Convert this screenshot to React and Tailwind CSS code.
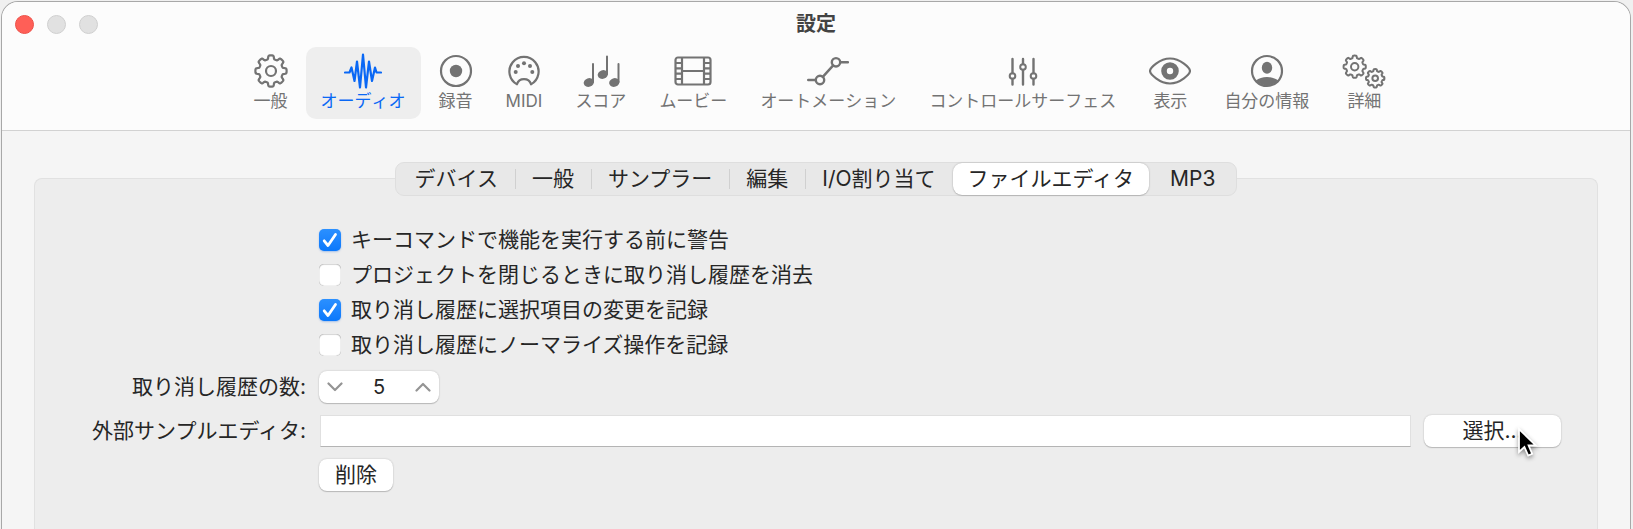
import { useState } from 'react'

// Closed gear outline around (cx, cy): eight soft teeth between the two radii
function gearPath(cx, cy, outer, inner) {
  const mid = (outer + inner) / 2
  const amp = (outer - inner) / 2
  const pts = []
  for (let i = 0; i < 160; i++) {
    const a = (i * Math.PI) / 80
    const r = mid + amp * Math.tanh(3 * (Math.cos(8 * a) + 0.1))
    pts.push(`${(cx + r * Math.sin(a)).toFixed(2)} ${(cy - r * Math.cos(a)).toFixed(2)}`)
  }
  return `M${pts.join('L')}Z`
}

function GearIcon() {
  return (
    <svg width="34" height="36" viewBox="0 0 34 36" fill="none" stroke="currentColor" strokeWidth="2.200" strokeLinejoin="round">
      <path d={gearPath(17, 18, 15.6, 12)} />
      <circle cx="17" cy="18" r="5" />
    </svg>
  )
}

function WaveIcon() {
  return (
    <svg width="38" height="36" viewBox="0 0 38 36" fill="none" stroke="currentColor" strokeWidth="2.200" strokeLinecap="round" strokeLinejoin="round">
      <path d="M1 19.500H5.500L7.500 14.500L10.500 28L13 8.500L16 34.500L19 1.500L22 34.500L25 8.500L28 28L31 14.500L32.500 19.500H37" />
    </svg>
  )
}

function RecordIcon() {
  return (
    <svg width="34" height="36" viewBox="0 0 34 36" fill="none" stroke="currentColor" strokeWidth="2.200">
      <circle cx="17" cy="18" r="15" />
      <circle cx="17" cy="18" r="6.200" fill="currentColor" stroke="none" />
    </svg>
  )
}

function MidiIcon() {
  return (
    <svg width="32" height="36" viewBox="0 0 32 36" fill="none" stroke="currentColor" strokeWidth="2.200" strokeLinejoin="round">
      <path d="M9 31.300A14.600 14.600 0 1 1 23 31.300C21 24.500 11 24.500 9 31.300Z" />
      <g fill="currentColor" stroke="none">
        <circle cx="7.700" cy="19" r="2" />
        <circle cx="10" cy="13" r="2" />
        <circle cx="16" cy="10.300" r="2" />
        <circle cx="22" cy="13" r="2" />
        <circle cx="24.300" cy="19" r="2" />
      </g>
    </svg>
  )
}

function ScoreIcon() {
  return (
    <svg width="38" height="36" viewBox="0 0 38 36" fill="currentColor" stroke="currentColor" strokeWidth="2" strokeLinecap="round">
      <path d="M11 29V11M25 21V3.500M36.500 29V11" />
      <g stroke="none">
        <ellipse cx="6.800" cy="29.500" rx="5.200" ry="4.300" transform="rotate(-18 6.800 29.500)" />
        <ellipse cx="20.800" cy="21.500" rx="5.200" ry="4.300" transform="rotate(-18 20.800 21.500)" />
        <ellipse cx="32.300" cy="29.500" rx="5.200" ry="4.300" transform="rotate(-18 32.300 29.500)" />
      </g>
    </svg>
  )
}

function MovieIcon() {
  return (
    <svg width="38" height="36" viewBox="0 0 38 36" fill="none" stroke="currentColor" strokeWidth="2.200">
      <rect x="1.500" y="4.500" width="35" height="27" rx="2.500" />
      <path d="M8 5V31M30 5V31M8 18H30" />
      <path d="M2 10H8M2 15.300H8M2 20.600H8M2 26H8M30 10H36M30 15.300H36M30 20.600H36M30 26H36" />
    </svg>
  )
}

function AutomationIcon() {
  return (
    <svg width="42" height="36" viewBox="0 0 42 36" fill="none" stroke="currentColor" strokeWidth="2.400" strokeLinecap="round">
      <circle cx="13" cy="27" r="4.200" />
      <circle cx="29" cy="9.300" r="4.200" />
      <path d="M1.200 27H8.800M15.800 23.900L26.200 12.400M33.200 9.300H41" />
    </svg>
  )
}

function SlidersIcon() {
  return (
    <svg width="30" height="36" viewBox="0 0 30 36" fill="none" stroke="currentColor" strokeWidth="2.400" strokeLinecap="round">
      <path d="M4.500 6V20M4.500 26V31.500M15 6V11M15 17V31.500M25.500 6V20M25.500 26V31.500" />
      <g strokeWidth="2">
        <circle cx="4.500" cy="23" r="2.800" />
        <circle cx="15" cy="14" r="2.800" />
        <circle cx="25.500" cy="23" r="2.800" />
      </g>
    </svg>
  )
}

function EyeIcon() {
  return (
    <svg width="42" height="36" viewBox="0 0 42 36" fill="none" stroke="currentColor" strokeWidth="2.200">
      <path d="M1 18C1 15 10.500 5.500 21 5.500S41 15 41 18S31.500 30.500 21 30.500S1 21 1 18Z" />
      <circle cx="21" cy="18" r="6" strokeWidth="5.600" />
    </svg>
  )
}

function PersonIcon() {
  return (
    <svg width="34" height="36" viewBox="0 0 34 36" fill="none" stroke="currentColor" strokeWidth="2.200">
      <circle cx="17" cy="18" r="15" />
      <ellipse cx="17" cy="14.800" rx="5.200" ry="6" fill="currentColor" stroke="none" />
      <path d="M6 27.500C11 22.800 23 22.800 28 27.500A15 15 0 0 1 6 27.500Z" fill="currentColor" stroke="none" />
    </svg>
  )
}

function GearsIcon() {
  return (
    <svg width="44" height="36" viewBox="0 0 44 36" fill="none" stroke="currentColor" strokeWidth="2" strokeLinejoin="round">
      <path d={gearPath(12.7, 13.7, 11.1, 8.7)} />
      <circle cx="12.700" cy="13.700" r="3.700" />
      <path d={gearPath(33.2, 25.3, 9.2, 7.2)} />
      <circle cx="33.200" cy="25.300" r="2.800" />
    </svg>
  )
}

const PANES = [
  { label: '一般', Icon: GearIcon },
  { label: 'オーディオ', Icon: WaveIcon },
  { label: '録音', Icon: RecordIcon },
  { label: 'MIDI', Icon: MidiIcon },
  { label: 'スコア', Icon: ScoreIcon },
  { label: 'ムービー', Icon: MovieIcon },
  { label: 'オートメーション', Icon: AutomationIcon },
  { label: 'コントロールサーフェス', Icon: SlidersIcon },
  { label: '表示', Icon: EyeIcon },
  { label: '自分の情報', Icon: PersonIcon },
  { label: '詳細', Icon: GearsIcon },
]

const TABS = ['デバイス', '一般', 'サンプラー', '編集', 'I/O割り当て', 'ファイルエディタ', 'MP3']

const OPTIONS = [
  { id: 'warn', label: 'キーコマンドで機能を実行する前に警告', checked: true },
  { id: 'clear', label: 'プロジェクトを閉じるときに取り消し履歴を消去', checked: false },
  { id: 'selection', label: '取り消し履歴に選択項目の変更を記録', checked: true },
  { id: 'normalize', label: '取り消し履歴にノーマライズ操作を記録', checked: false },
]

function PaneButton({ label, Icon, active, onClick }) {
  return (
    <button
      type="button"
      onClick={onClick}
      className={`flex h-18 shrink-0 flex-col items-center rounded-[10px] px-[15px] pt-[6px] text-[17px] leading-6 whitespace-nowrap [font-kerning:none] ${
        active ? 'bg-[#eeeeee] text-[#0a68f5]' : 'text-[#737373]'
      }`}
    >
      <Icon />
      {label}
    </button>
  )
}

function Tab({ label, active, divided, onClick }) {
  return (
    <button
      type="button"
      role="tab"
      aria-selected={active}
      onClick={onClick}
      className={`flex h-8 items-center whitespace-nowrap ${
        active ? 'rounded-[9px] bg-white px-[15px] shadow-[0_0_2px_rgba(0,0,0,0.25),0_1px_1px_rgba(0,0,0,0.12)]' : 'px-[17px] first:pl-[19px] last:px-[21px]'
      }`}
    >
      {label}
      {divided && <span className="-mr-[18px] ml-[17px] h-5 w-px bg-[#d0d0d0]" />}
    </button>
  )
}

function Option({ option, onToggle }) {
  return (
    <label className="flex h-[35px] items-center gap-[10px]">
      <span className="grid place-items-center">
        <input
          type="checkbox"
          checked={option.checked}
          onChange={() => onToggle(option.id)}
          className="col-start-1 row-start-1 size-[22px] appearance-none rounded-[5px] bg-white shadow-[inset_0_0_1px_rgba(0,0,0,0.5),inset_0_1px_1px_rgba(0,0,0,0.12)] checked:bg-linear-to-b checked:from-[#2b90ff] checked:to-[#0a78fb] checked:shadow-[0_1px_2px_rgba(0,90,220,0.3)]"
        />
        {option.checked && (
          <svg className="pointer-events-none col-start-1 row-start-1" width="22" height="22" viewBox="0 0 22 22" fill="none" stroke="white" strokeWidth="2.800" strokeLinecap="round" strokeLinejoin="round">
            <path d="M5.200 11.800L9 16.500L16.500 5.500" />
          </svg>
        )}
      </span>
      {option.label}
    </label>
  )
}

function Chevron({ d }) {
  return (
    <svg width="16" height="10" viewBox="0 0 16 10" fill="none" stroke="#949494" strokeWidth="2.200" strokeLinecap="round" strokeLinejoin="round">
      <path d={d} />
    </svg>
  )
}

function Cursor() {
  return (
    <svg className="pointer-events-none absolute top-3 left-[93px] drop-shadow-[0_2px_2px_rgba(0,0,0,0.4)]" width="22" height="32" viewBox="0 0 22 32">
      <path d="M2 2V25L7.400 20L11.200 28.500L15.200 26.800L11.600 18.500H19Z" fill="black" stroke="white" strokeWidth="1.800" />
    </svg>
  )
}

const BUTTON = 'rounded-[8px] bg-white shadow-[0_0_2px_rgba(0,0,0,0.2),0_1px_1px_rgba(0,0,0,0.18)]'

export default function App() {
  const [pane, setPane] = useState('オーディオ')
  const [tab, setTab] = useState('ファイルエディタ')
  const [options, setOptions] = useState(OPTIONS)
  const [undoSteps, setUndoSteps] = useState(5)
  const [editorPath, setEditorPath] = useState('')

  const toggle = (id) => setOptions((list) => list.map((o) => (o.id === id ? { ...o, checked: !o.checked } : o)))

  return (
    <div className="flex min-h-screen flex-col overflow-hidden bg-[#f0f0f0] pt-px pr-0.5 pl-px font-['Inter','Noto_Sans_CJK_JP',sans-serif] text-[21px] leading-8 text-[#262626]">
      <div className="flex grow flex-col overflow-hidden rounded-t-[17px] border border-b-0 border-[#a8a8a8] bg-[#f5f5f5]">
        <header className="border-b border-[#d2d2d2] bg-[#fcfcfc] pb-[11px]">
          <div className="grid h-[45px] grid-cols-[1fr_auto_1fr] items-center px-[13px]">
            <div className="flex gap-[13px]">
              <button type="button" aria-label="閉じる" className="size-[19px] rounded-full border border-[#ec5048] bg-[#ff5f57]" />
              <button type="button" aria-label="しまう" className="size-[19px] rounded-full border border-[#cfcfcf] bg-[#e1e1e1]" />
              <button type="button" aria-label="拡大" className="size-[19px] rounded-full border border-[#cfcfcf] bg-[#e1e1e1]" />
            </div>
            <h1 className="pb-0.5 text-xl font-bold text-[#434343]">設定</h1>
          </div>
          <nav className="flex justify-center gap-[3px] pl-2">
            {PANES.map(({ label, Icon }) => (
              <PaneButton key={label} label={label} Icon={Icon} active={label === pane} onClick={() => setPane(label)} />
            ))}
          </nav>
        </header>

        <main className="flex grow flex-col px-8 pt-[31px]">
          <div role="tablist" className="relative z-10 -mb-[18px] flex self-center rounded-[9px] border border-[#dedede] bg-[#e8e8e8]">
            {TABS.map((label, i) => (
              <Tab
                key={label}
                label={label}
                active={label === tab}
                divided={i < TABS.length - 1 && label !== tab && TABS[i + 1] !== tab}
                onClick={() => setTab(label)}
              />
            ))}
          </div>

          <section className="grow rounded-t-[8px] border border-b-0 border-[#e1e1e1] bg-[#ededed] pt-[43px] pr-9 pb-9">
            <div className="pl-[284px]">
              {options.map((option) => (
                <Option key={option.id} option={option} onToggle={toggle} />
              ))}
            </div>

            <div className="mt-[9px] grid grid-cols-[271px_1fr] items-center gap-x-[13px] gap-y-[12px]">
              <label htmlFor="undo-steps" className="text-right">取り消し履歴の数:</label>
              <div className={`flex h-8 w-[120px] items-center justify-between px-2 ${BUTTON}`}>
                <button type="button" aria-label="減らす" onClick={() => setUndoSteps((n) => Math.max(0, n - 1))}>
                  <Chevron d="M1.500 1.500L8 8L14.500 1.500" />
                </button>
                <input
                  id="undo-steps"
                  value={undoSteps}
                  onChange={(e) => setUndoSteps(Number(e.target.value) || 0)}
                  className="w-10 bg-transparent text-center text-xl outline-none"
                />
                <button type="button" aria-label="増やす" onClick={() => setUndoSteps((n) => n + 1)}>
                  <Chevron d="M1.500 8.500L8 2L14.500 8.500" />
                </button>
              </div>

              <label htmlFor="editor-path" className="text-right">外部サンプルエディタ:</label>
              <div className="flex items-center gap-[13px] pl-px">
                <input
                  id="editor-path"
                  value={editorPath}
                  onChange={(e) => setEditorPath(e.target.value)}
                  className="h-8 min-w-0 grow border border-[#e0e0e0] border-b-[#b4b4b4] bg-white px-2 outline-none"
                />
                <div className="relative">
                  <button type="button" className={`h-8 w-[137px] ${BUTTON}`}>選択...</button>
                  <Cursor />
                </div>
              </div>

              <button type="button" className={`col-start-2 h-8 w-[74px] ${BUTTON}`}>削除</button>
            </div>
          </section>
        </main>
      </div>
    </div>
  )
}
